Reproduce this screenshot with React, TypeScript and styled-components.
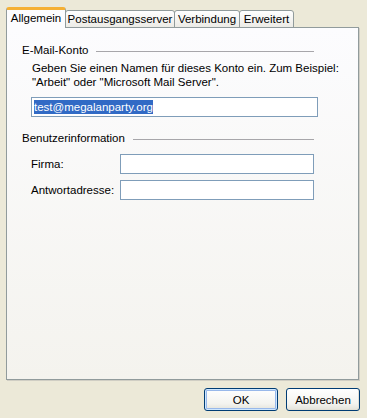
import React from "react";
import styled, { createGlobalStyle } from "styled-components";

const GlobalStyle = createGlobalStyle`
  html, body {
    margin: 0;
    padding: 0;
    background: #ece9d8;
  }
  body {
    font-family: Tahoma, "Liberation Sans", Arial, sans-serif;
    font-size: 11.5px;
    color: #000;
  }
`;

const TABS = [
  { label: "Allgemein", w: 60 },
  { label: "Postausgangsserver", w: 110 },
  { label: "Verbindung", w: 66 },
  { label: "Erweitert", w: 55 },
];

const Window = styled.div`
  width: 367px;
  height: 418px;
  box-sizing: border-box;
  padding: 7px 7px 7px 6px;
  display: flex;
  flex-direction: column;
  background: #ece9d8;
`;

const TabStrip = styled.div`
  display: flex;
  align-items: flex-end;
  height: 21px;
  position: relative;
  z-index: 2;
  margin-bottom: -1px;
`;

const Tab = styled.div<{ $active?: boolean; $w: number }>`
  box-sizing: border-box;
  width: ${(p) => p.$w}px;
  height: ${(p) => (p.$active ? "21px" : "18px")};
  padding-top: ${(p) => (p.$active ? "2px" : "1px")};
  margin-left: ${(p) => (p.$active ? "0" : "-1px")};
  border: 1px solid #919b9c;
  border-bottom: ${(p) => (p.$active ? "none" : "1px solid #919b9c")};
  border-top: ${(p) => (p.$active ? "3px solid #f5b034" : "1px solid #919b9c")};
  border-radius: 3px 3px 0 0;
  background: ${(p) =>
    p.$active ? "#fcfcfe" : "linear-gradient(#ffffff, #ecebe6)"};
  display: flex;
  justify-content: center;
  align-items: ${(p) => (p.$active ? "flex-start" : "center")};
  white-space: nowrap;
  line-height: 13px;
`;

const Panel = styled.div`
  flex: 1;
  box-sizing: border-box;
  margin-right: 1px;
  border: 1px solid #919b9c;
  box-shadow: 1px 1px 0 #d0cec4;
  background: linear-gradient(#fcfcfe, #f4f3ee);
  padding: 16px 44px 0 15px;
`;

const GroupHeader = styled.div<{ $mt?: number }>`
  display: flex;
  align-items: center;
  margin-top: ${(p) => p.$mt ?? 0}px;
  line-height: 13px;
`;

const Rule = styled.div`
  flex: 1;
  height: 1px;
  background: #a7a6aa;
  margin-left: 8px;
  margin-top: 1px;
`;

const Hint = styled.p`
  margin: 4px 0 0 10px;
  line-height: 14px;
  white-space: nowrap;
`;

const TextInput = styled.input<{ $w: number }>`
  box-sizing: border-box;
  width: ${(p) => p.$w}px;
  height: 20px;
  border: 1px solid #7f9db9;
  background: #fff;
  font: inherit;
  padding: 0 2px;
  outline: none;
`;

const EmailWrap = styled.div`
  margin: 8px 0 0 9px;
`;

const Selected = styled.span`
  background: #316ac5;
  color: #fff;
  line-height: 14px;
`;

const SelectedField = styled.div`
  box-sizing: border-box;
  width: 287px;
  height: 20px;
  border: 1px solid #7f9db9;
  background: #fff;
  padding: 1px 2px;
  display: flex;
  align-items: center;
`;

const Row = styled.div<{ $mt: number }>`
  display: flex;
  align-items: center;
  margin: ${(p) => p.$mt}px 0 0 9px;
`;

const Label = styled.label`
  width: 90px;
`;

const Footer = styled.div`
  display: flex;
  justify-content: flex-end;
  gap: 8px;
  margin-top: 8px;
`;

const Button = styled.button<{ $default?: boolean }>`
  box-sizing: border-box;
  width: 74px;
  height: 23px;
  font: inherit;
  color: #000;
  border: 1px solid #003c74;
  border-radius: 3px;
  background: linear-gradient(#ffffff, #f3f3ef 70%, #e3e2da);
  box-shadow: ${(p) =>
    p.$default
      ? "inset 0 0 0 1px #cee7ff, inset 0 0 0 2px #98b8ea"
      : "inset -1px -1px 0 #e2e0d6"};
  padding: 0;
`;

export default function App() {
  return (
    <>
      <GlobalStyle />
      <Window>
        <TabStrip>
          {TABS.map((t, i) => (
            <Tab key={t.label} $active={i === 0} $w={t.w}>
              {t.label}
            </Tab>
          ))}
        </TabStrip>
        <Panel>
          <GroupHeader>
            E-Mail-Konto
            <Rule />
          </GroupHeader>
          <Hint>
            Geben Sie einen Namen für dieses Konto ein. Zum Beispiel:
            <br />
            "Arbeit" oder "Microsoft Mail Server".
          </Hint>
          <EmailWrap>
            <SelectedField>
              <Selected>test@megalanparty.org</Selected>
            </SelectedField>
          </EmailWrap>
          <GroupHeader $mt={15}>
            Benutzerinformation
            <Rule />
          </GroupHeader>
          <Row $mt={9}>
            <Label>Firma:</Label>
            <TextInput $w={196} />
          </Row>
          <Row $mt={6}>
            <Label>Antwortadresse:</Label>
            <TextInput $w={196} />
          </Row>
        </Panel>
        <Footer>
          <Button $default>OK</Button>
          <Button>Abbrechen</Button>
        </Footer>
      </Window>
    </>
  );
}
